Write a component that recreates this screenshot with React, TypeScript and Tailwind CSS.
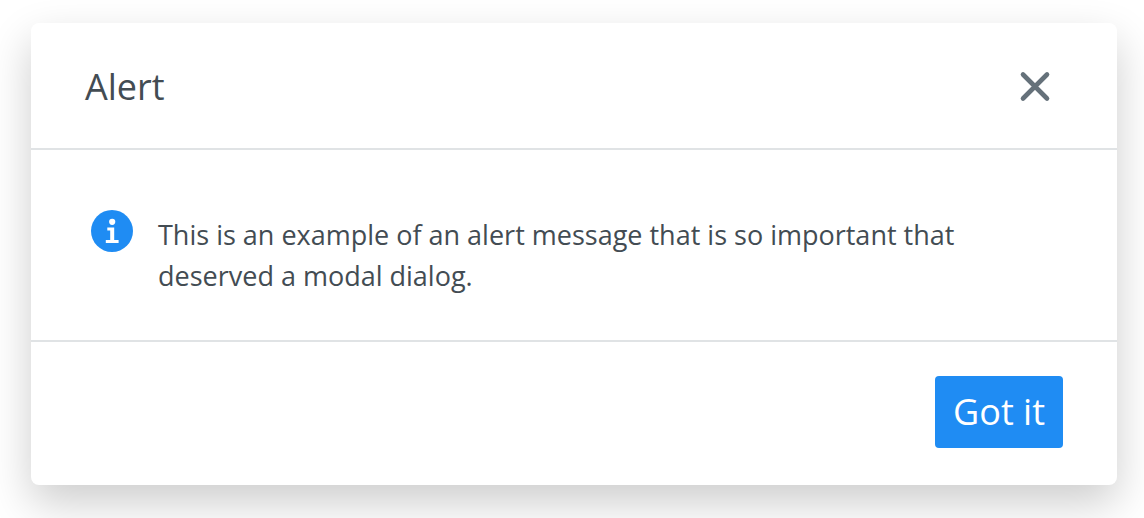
function InfoIcon() {
  return (
    <svg viewBox="0 0 42 42" aria-hidden="true" className="size-[42px] shrink-0">
      <circle cx="21" cy="21" r="21" fill="#1f8cf3" />
      <circle cx="21.2" cy="11.8" r="3.1" fill="white" />
      <path d="M16.3 17.4H23.2V29.9H27.6V33H14.8V29.9H19.2V20.4H16.3Z" fill="white" />
    </svg>
  );
}

function CloseIcon() {
  return (
    <svg
      viewBox="0 0 36 36"
      aria-hidden="true"
      className="size-9"
      fill="none"
      stroke="currentColor"
      strokeWidth="4.6"
      strokeLinecap="round"
    >
      <path d="M6 5.5L30 29.5M30 5.5L6 29.5" />
    </svg>
  );
}

export default function App() {
  return (
    <main className="min-h-screen bg-white pt-[23px] pr-[27px] pb-8 pl-[31px] font-['Open_Sans',sans-serif] text-[#434c53]">
      <section
        role="dialog"
        aria-labelledby="dialog-title"
        aria-describedby="dialog-message"
        className="rounded-lg bg-white shadow-[0_18px_44px_rgba(0,0,0,0.2)]"
      >
        <header className="flex items-center justify-between border-b-2 border-[#e0e3e5] pt-10 pr-16 pb-[37px] pl-[54px]">
          <h1 id="dialog-title" className="text-[36px] leading-[48px]">Alert</h1>
          <button type="button" aria-label="Close" className="text-[#65717a]">
            <CloseIcon />
          </button>
        </header>
        <div className="flex items-start gap-[25px] border-b-2 border-[#e0e3e5] px-[60px] pt-[60px] pb-11">
          <InfoIcon />
          <p id="dialog-message" className="max-w-[840px] pt-1 text-[27px] leading-[41px]">
            This is an example of an alert message that is so important that deserved a modal dialog.
          </p>
        </div>
        <footer className="flex justify-end px-[54px] pt-[34px] pb-[37px]">
          <button type="button" className="rounded-sm bg-[#1f8cf3] px-[18px] py-3 text-[36px] leading-[48px] text-white">
            Got it
          </button>
        </footer>
      </section>
    </main>
  );
}
